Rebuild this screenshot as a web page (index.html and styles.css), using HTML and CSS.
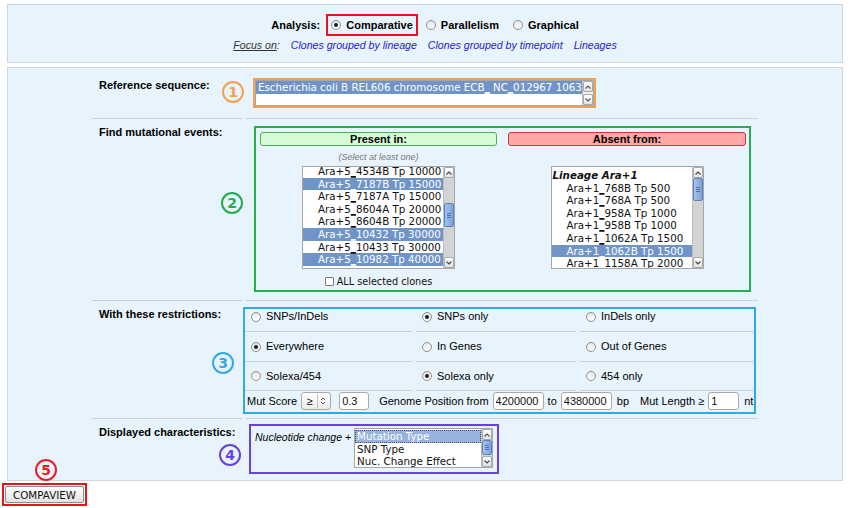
FILE: index.html
```html
<!DOCTYPE html>
<html lang="en">
<head>
<meta charset="utf-8">
<title>Compaview</title>
<link rel="stylesheet" href="styles.css">
</head>
<body>
<div class="top">
  <div class="analysis">
    <b class="alabel">Analysis:</b>
    <span class="hl-red"><span class="radio on"></span><b>Comparative</b></span>
    <span class="ropt"><span class="radio"></span><b>Parallelism</b></span>
    <span class="ropt"><span class="radio"></span><b>Graphical</b></span>
  </div>
  <div class="focus">
    <span class="focus-lbl"><u>Focus on</u>:</span>
    <a href="#">Clones grouped by lineage</a>
    <a href="#">Clones grouped by timepoint</a>
    <a href="#">Lineages</a>
  </div>
</div>

<div class="panel">
  <div class="form">
    <div class="row r1">
      <div class="lab">Reference sequence:</div>
      <div class="val">
        <div class="hl-orange">
          <div class="list ref">
            <div class="opts"><div class="opt sel">Escherichia coli B REL606 chromosome ECB<span class="us">_</span> NC<span class="us">_</span>012967 1063</div></div>
            <div class="sb">
              <span class="arr"><svg width="8" height="6" viewBox="0 0 8 6"><path d="M1.5 4.5 L4 2 L6.5 4.5" fill="none" stroke="#555" stroke-width="1.1"/></svg></span>
              <span class="track light"></span>
              <span class="arr"><svg width="8" height="6" viewBox="0 0 8 6"><path d="M1.5 1.5 L4 4 L6.5 1.5" fill="none" stroke="#555" stroke-width="1.1"/></svg></span>
            </div>
          </div>
        </div>
      </div>
      <span class="num n1">1</span>
    </div>

    <div class="row r2">
      <div class="lab">Find mutational events:</div>
      <div class="val">
        <div class="hl-green">
          <div class="col">
            <div class="hdr present">Present in:</div>
            <div class="hint">(Select at least one)</div>
            <div class="list lst">
              <div class="opts ind up2">
                <div class="opt">Ara+5<span class="us">_</span>4534B Tp 10000</div>
                <div class="opt sel">Ara+5<span class="us">_</span>7187B Tp 15000</div>
                <div class="opt">Ara+5<span class="us">_</span>7187A Tp 15000</div>
                <div class="opt">Ara+5<span class="us">_</span>8604A Tp 20000</div>
                <div class="opt">Ara+5<span class="us">_</span>8604B Tp 20000</div>
                <div class="opt sel">Ara+5<span class="us">_</span>10432 Tp 30000</div>
                <div class="opt">Ara+5<span class="us">_</span>10433 Tp 30000</div>
                <div class="opt sel">Ara+5<span class="us">_</span>10982 Tp 40000</div>
              </div>
              <div class="sb">
                <span class="arr"><svg width="8" height="6" viewBox="0 0 8 6"><path d="M1.5 4.5 L4 2 L6.5 4.5" fill="none" stroke="#444" stroke-width="1.1"/></svg></span>
                <span class="track"><span class="thumb t-left"></span></span>
                <span class="arr"><svg width="8" height="6" viewBox="0 0 8 6"><path d="M1.5 1.5 L4 4 L6.5 1.5" fill="none" stroke="#444" stroke-width="1.1"/></svg></span>
              </div>
            </div>
            <div class="allsel"><span class="cb"></span><span>ALL selected clones</span></div>
          </div>
          <div class="col">
            <div class="hdr absent">Absent from:</div>
            <div class="hint"></div>
            <div class="list lst">
              <div class="opts ind dn2">
                <div class="grp">Lineage Ara+1</div>
                <div class="opt">Ara+1<span class="us">_</span>768B Tp 500</div>
                <div class="opt">Ara+1<span class="us">_</span>768A Tp 500</div>
                <div class="opt">Ara+1<span class="us">_</span>958A Tp 1000</div>
                <div class="opt">Ara+1<span class="us">_</span>958B Tp 1000</div>
                <div class="opt">Ara+1<span class="us">_</span>1062A Tp 1500</div>
                <div class="opt sel">Ara+1<span class="us">_</span>1062B Tp 1500</div>
                <div class="opt">Ara+1<span class="us">_</span>1158A Tp 2000</div>
              </div>
              <div class="sb">
                <span class="arr"><svg width="8" height="6" viewBox="0 0 8 6"><path d="M1.5 4.5 L4 2 L6.5 4.5" fill="none" stroke="#444" stroke-width="1.1"/></svg></span>
                <span class="track"><span class="thumb t-right"></span></span>
                <span class="arr"><svg width="8" height="6" viewBox="0 0 8 6"><path d="M1.5 1.5 L4 4 L6.5 1.5" fill="none" stroke="#444" stroke-width="1.1"/></svg></span>
              </div>
            </div>
          </div>
        </div>
      </div>
      <span class="num n2">2</span>
    </div>

    <div class="row r3">
      <div class="lab">With these restrictions:</div>
      <div class="val">
        <div class="hl-blue">
          <div class="cell c-first"><span class="radio"></span>SNPs/InDels</div>
          <div class="cell c-first"><span class="radio on"></span>SNPs only</div>
          <div class="cell c-first"><span class="radio"></span>InDels only</div>
          <div class="cell"><span class="radio on"></span>Everywhere</div>
          <div class="cell"><span class="radio"></span>In Genes</div>
          <div class="cell"><span class="radio"></span>Out of Genes</div>
          <div class="cell"><span class="radio"></span>Solexa/454</div>
          <div class="cell"><span class="radio on"></span>Solexa only</div>
          <div class="cell"><span class="radio"></span>454 only</div>
          <div class="params">
            <span>Mut Score</span>
            <span class="sel-ge"><span class="ge">≥</span><svg width="10" height="10" viewBox="0 0 10 10"><path d="M3 4 L5 2 L7 4 M3 6 L5 8 L7 6" fill="none" stroke="#555" stroke-width="1"/></svg></span>
            <input class="inp w30 m-score" value="0.3">
            <span class="m-gen">Genome Position from</span>
            <input class="inp w51" value="4200000">
            <span>to</span>
            <input class="inp w51" value="4380000">
            <span class="m-bp">bp</span>
            <span class="m-len">Mut Length ≥</span>
            <input class="inp w31" value="1">
            <span class="m-nt">nt</span>
          </div>
        </div>
      </div>
      <span class="num n3">3</span>
    </div>

    <div class="row r4">
      <div class="lab">Displayed characteristics:</div>
      <div class="val">
        <div class="hl-purple">
          <span class="nuc">Nucleotide change +</span>
          <div class="list chars">
            <div class="opts">
              <div class="opt sel2">Mutation Type</div>
              <div class="opt">SNP Type</div>
              <div class="opt">Nuc. Change Effect</div>
            </div>
            <div class="sb">
              <span class="arr"><svg width="8" height="6" viewBox="0 0 8 6"><path d="M1.5 4.5 L4 2 L6.5 4.5" fill="none" stroke="#555" stroke-width="1.1"/></svg></span>
              <span class="track"><span class="thumb t-chars"></span></span>
              <span class="arr"><svg width="8" height="6" viewBox="0 0 8 6"><path d="M1.5 1.5 L4 4 L6.5 1.5" fill="none" stroke="#444" stroke-width="1.1"/></svg></span>
            </div>
          </div>
        </div>
      </div>
      <span class="num n4">4</span>
    </div>
  </div>
</div>

<div class="submit">
  <span class="num n5">5</span>
  <span class="hl-btn"><button class="btn" type="button">COMPAVIEW</button></span>
</div>
</body>
</html>
```

FILE: styles.css
```css
* { box-sizing: border-box; }
body {
  margin: 0;
  padding: 4px 0 0;
  font-family: "Liberation Sans", Arial, sans-serif;
  font-size: 11px;
  color: #000;
  background: #fff;
}
b { font-weight: bold; }

/* ---------- top panel ---------- */
.top {
  margin: 0 7px;
  height: 59px;
  background: #e8f4fd;
  border: 1px solid #cfd8e0;
  padding-top: 9px;
}
.analysis {
  display: flex;
  justify-content: center;
  align-items: center;
  height: 22px;
}
.alabel { margin-right: 6px; }
.hl-red {
  display: inline-flex;
  align-items: center;
  gap: 5px;
  height: 22px;
  padding: 0 3px;
  border: 2px solid #e8141b;
}
.ropt {
  display: inline-flex;
  align-items: center;
  gap: 5px;
  margin-left: 8px;
}
.ropt + .ropt { margin-left: 14px; }
.radio {
  display: inline-block;
  position: relative;
  flex: none;
  width: 10px;
  height: 10px;
  border-radius: 50%;
  border: 1px solid #8e8e8e;
  background: linear-gradient(#e6e6e6, #fff);
}
.radio.on::after {
  content: "";
  position: absolute;
  left: 2px;
  top: 2px;
  width: 4px;
  height: 4px;
  border-radius: 50%;
  background: #1e1e1e;
}
.focus {
  display: flex;
  justify-content: center;
  gap: 11px;
  margin-top: 3px;
  font-style: italic;
  font-size: 10.6px;
  line-height: 13px;
}
.focus-lbl { color: #333; }
.focus a { color: #1c1ccc; text-decoration: none; }

/* ---------- main panel ---------- */
.panel {
  margin: 4px 7px 0;
  background: #e8f4fd;
  border: 1px solid #cfd8e0;
  padding: 4px 0 6px;
}
.form { width: 666px; margin: 0 auto; }
.row {
  display: grid;
  grid-template-columns: 150px 512px;
  column-gap: 4px;
  position: relative;
}
.lab {
  padding: 6px 0 6px 7px;
  font-weight: bold;
  line-height: 14px;
  white-space: nowrap;
  border-bottom: 1px solid #c9d2da;
}
.val { border-bottom: 1px solid #c9d2da; }
.r4 .lab, .r4 .val { border-bottom: 0; }

.r1 .val { padding: 6px 0 10px 7px; }
.r2 .val { padding: 7px 0 8px 8px; }
.r3 .val { padding: 6px 0 4px; }
.r4 .val { padding: 5px 0 0 3px; }

/* circled annotations */
.num {
  position: absolute;
  width: 22px;
  height: 22px;
  border: 2px solid;
  border-radius: 50%;
  display: flex;
  align-items: center;
  justify-content: center;
  font: bold 14px "DejaVu Sans", sans-serif;
}
.n1 { left: 130px; top: 9px; color: #f4a04c; border-color: #f4a04c; }
.n2 { left: 129px; top: 73px; color: #22ac48; border-color: #22ac48; }
.n3 { left: 120px; top: 51px; color: #34a9e1; border-color: #34a9e1; }
.n4 { left: 127px; top: 25px; color: #6840dc; border-color: #6840dc; }
.n5 { left: 33px; top: -24px; color: #ee1c24; border-color: #ee1c24; }

/* ---------- list boxes ---------- */
.list {
  display: flex;
  background: #fff;
  border: 1px solid #a6a6a6;
  overflow: hidden;
}
.opts {
  flex: 1;
  overflow: hidden;
  font-family: "DejaVu Sans", sans-serif;
  font-size: 10.3px;
  line-height: 12.6px;
  white-space: nowrap;
  color: #111;
}
.us {
  text-decoration: underline;
  text-decoration-thickness: 1px;
  text-underline-offset: 1px;
}
.opt { padding-left: 2px; }
.opt.sel { background: #7094c8; color: #fff; }
.opt.sel2 { background: #98b3de; color: #fff; outline: 1px dotted #555; outline-offset: -1px; }
.ind .opt { padding-left: 15px; }
.up2 { margin-top: -2px; }
.dn2 { margin-top: 2px; }
.grp { font-weight: bold; font-style: italic; padding-left: 1px; }

.sb {
  width: 11px;
  flex: none;
  display: flex;
  flex-direction: column;
  background: #d3d3d3;
  border-left: 1px solid #bcbcbc;
}
.arr {
  height: 11px;
  flex: none;
  display: flex;
  align-items: center;
  justify-content: center;
  background: linear-gradient(#fdfdfd, #e4e4e4);
  border: 1px solid #a9a9a9;
  border-radius: 2px;
}
.track { flex: 1; }
.track.light { background: #f2f2f2; }
.thumb {
  display: flex;
  align-items: center;
  justify-content: center;
  height: 24px;
  background: linear-gradient(90deg, #a6c2ea, #7ea2d8);
  border: 1px solid #5a82c0;
  border-radius: 2px;
}
.thumb::after {
  content: "";
  width: 4px;
  height: 1px;
  margin-top: -4px;
  background: #4d72b0;
  box-shadow: 0 2px #4d72b0, 0 4px #4d72b0;
}
.t-left { margin-top: 25px; }
.t-right { margin-top: 0; height: 23px; }
.t-chars { margin-top: 0; height: 15px; }

/* reference sequence */
.hl-orange {
  width: 343px;
  height: 30px;
  border: 2px solid #f4a04c;
}
.ref { height: 26px; }

/* find mutational events */
.hl-green {
  width: 497px;
  height: 166px;
  border: 2px solid #22b14c;
  padding: 4px 3px 0 4px;
  display: grid;
  grid-template-columns: 237px 238px;
  column-gap: 11px;
}
.col {
  display: flex;
  flex-direction: column;
  align-items: center;
}
.hdr {
  width: 100%;
  height: 14px;
  flex: none;
  border: 1px solid;
  border-radius: 3px;
  font-weight: bold;
  text-align: center;
  line-height: 12px;
}
.hdr.present { background: #d7fbd7; border-color: #4cb04c; }
.hdr.absent { background: #ffa6a6; border-color: #c23a3a; }
.hint {
  height: 11px;
  flex: none;
  margin-top: 6px;
  font-size: 9px;
  line-height: 11px;
  font-style: italic;
  color: #777;
}
.lst { width: 153px; height: 103px; flex: none; margin-top: 3px; }
.allsel {
  display: flex;
  align-items: center;
  gap: 3px;
  margin-top: 6px;
  height: 13px;
  line-height: 13px;
  font-family: "DejaVu Sans", sans-serif;
  font-size: 9.7px;
  color: #111;
  white-space: nowrap;
}
.cb {
  width: 9px;
  height: 9px;
  border: 1px solid #7a7a7a;
  border-radius: 1px;
  background: #fff;
}

/* restrictions */
.hl-blue {
  margin-left: -3px;
  width: 513px;
  height: 107px;
  border: 2px solid #34a9e1;
  display: grid;
  grid-template-columns: 167px 160px 174px;
  column-gap: 4px;
}
.cell {
  display: flex;
  align-items: center;
  gap: 5px;
  padding: 8px 0 7px 6px;
  line-height: 13px;
  border-bottom: 1px solid #c9d2da;
}
.cell.c-first { padding: 1px 0 8px 6px; }
.params {
  grid-column: 1 / -1;
  display: flex;
  align-items: center;
  gap: 4px;
  height: 21px;
  padding-left: 2px;
  white-space: nowrap;
}
.sel-ge {
  display: flex;
  align-items: center;
  width: 30px;
  height: 18px;
  border: 1px solid #a9a9a9;
  border-radius: 3px;
  background: linear-gradient(#fff, #ececec);
}
.ge {
  width: 16px;
  text-align: center;
  border-right: 1px solid #c4c4c4;
  line-height: 14px;
}
.inp {
  height: 18px;
  margin: 0;
  padding: 0 2px;
  border: 1px solid #a9a9a9;
  border-radius: 3px;
  background: #fff;
  font-family: "Liberation Sans", Arial, sans-serif;
  font-size: 11px;
  color: #111;
}
.w30 { width: 30px; }
.w31 { width: 31px; }
.w51 { width: 51px; }
.m-score { margin-left: 4px; }
.m-gen { margin-left: 6px; }
.m-bp { margin-left: 1px; }
.m-len { margin-left: 7px; }
.m-nt { margin-left: 1px; }

/* displayed characteristics */
.hl-purple {
  display: flex;
  align-items: flex-start;
  width: 250px;
  height: 50px;
  border: 2px solid #6840dc;
  padding: 2px 4px 0;
}
.nuc {
  font-style: italic;
  font-size: 10.5px;
  padding-top: 3px;
  white-space: nowrap;
  flex: none;
}
.chars { width: 139px; height: 40px; flex: none; margin-left: auto; }
.chars .opts { padding-top: 1px; }

/* submit */
.submit {
  position: relative;
  margin: 2px 0 0 2px;
}
.hl-btn {
  display: inline-block;
  border: 2px solid #e8141b;
  padding: 1px;
}
.btn {
  display: block;
  width: 79px;
  height: 17px;
  padding: 0;
  border: 1px solid #8d8d8d;
  border-radius: 2px;
  background: linear-gradient(#fefefe, #e3e3e3);
  font-family: "DejaVu Sans", sans-serif;
  font-size: 10.3px;
  color: #111;
}
```
